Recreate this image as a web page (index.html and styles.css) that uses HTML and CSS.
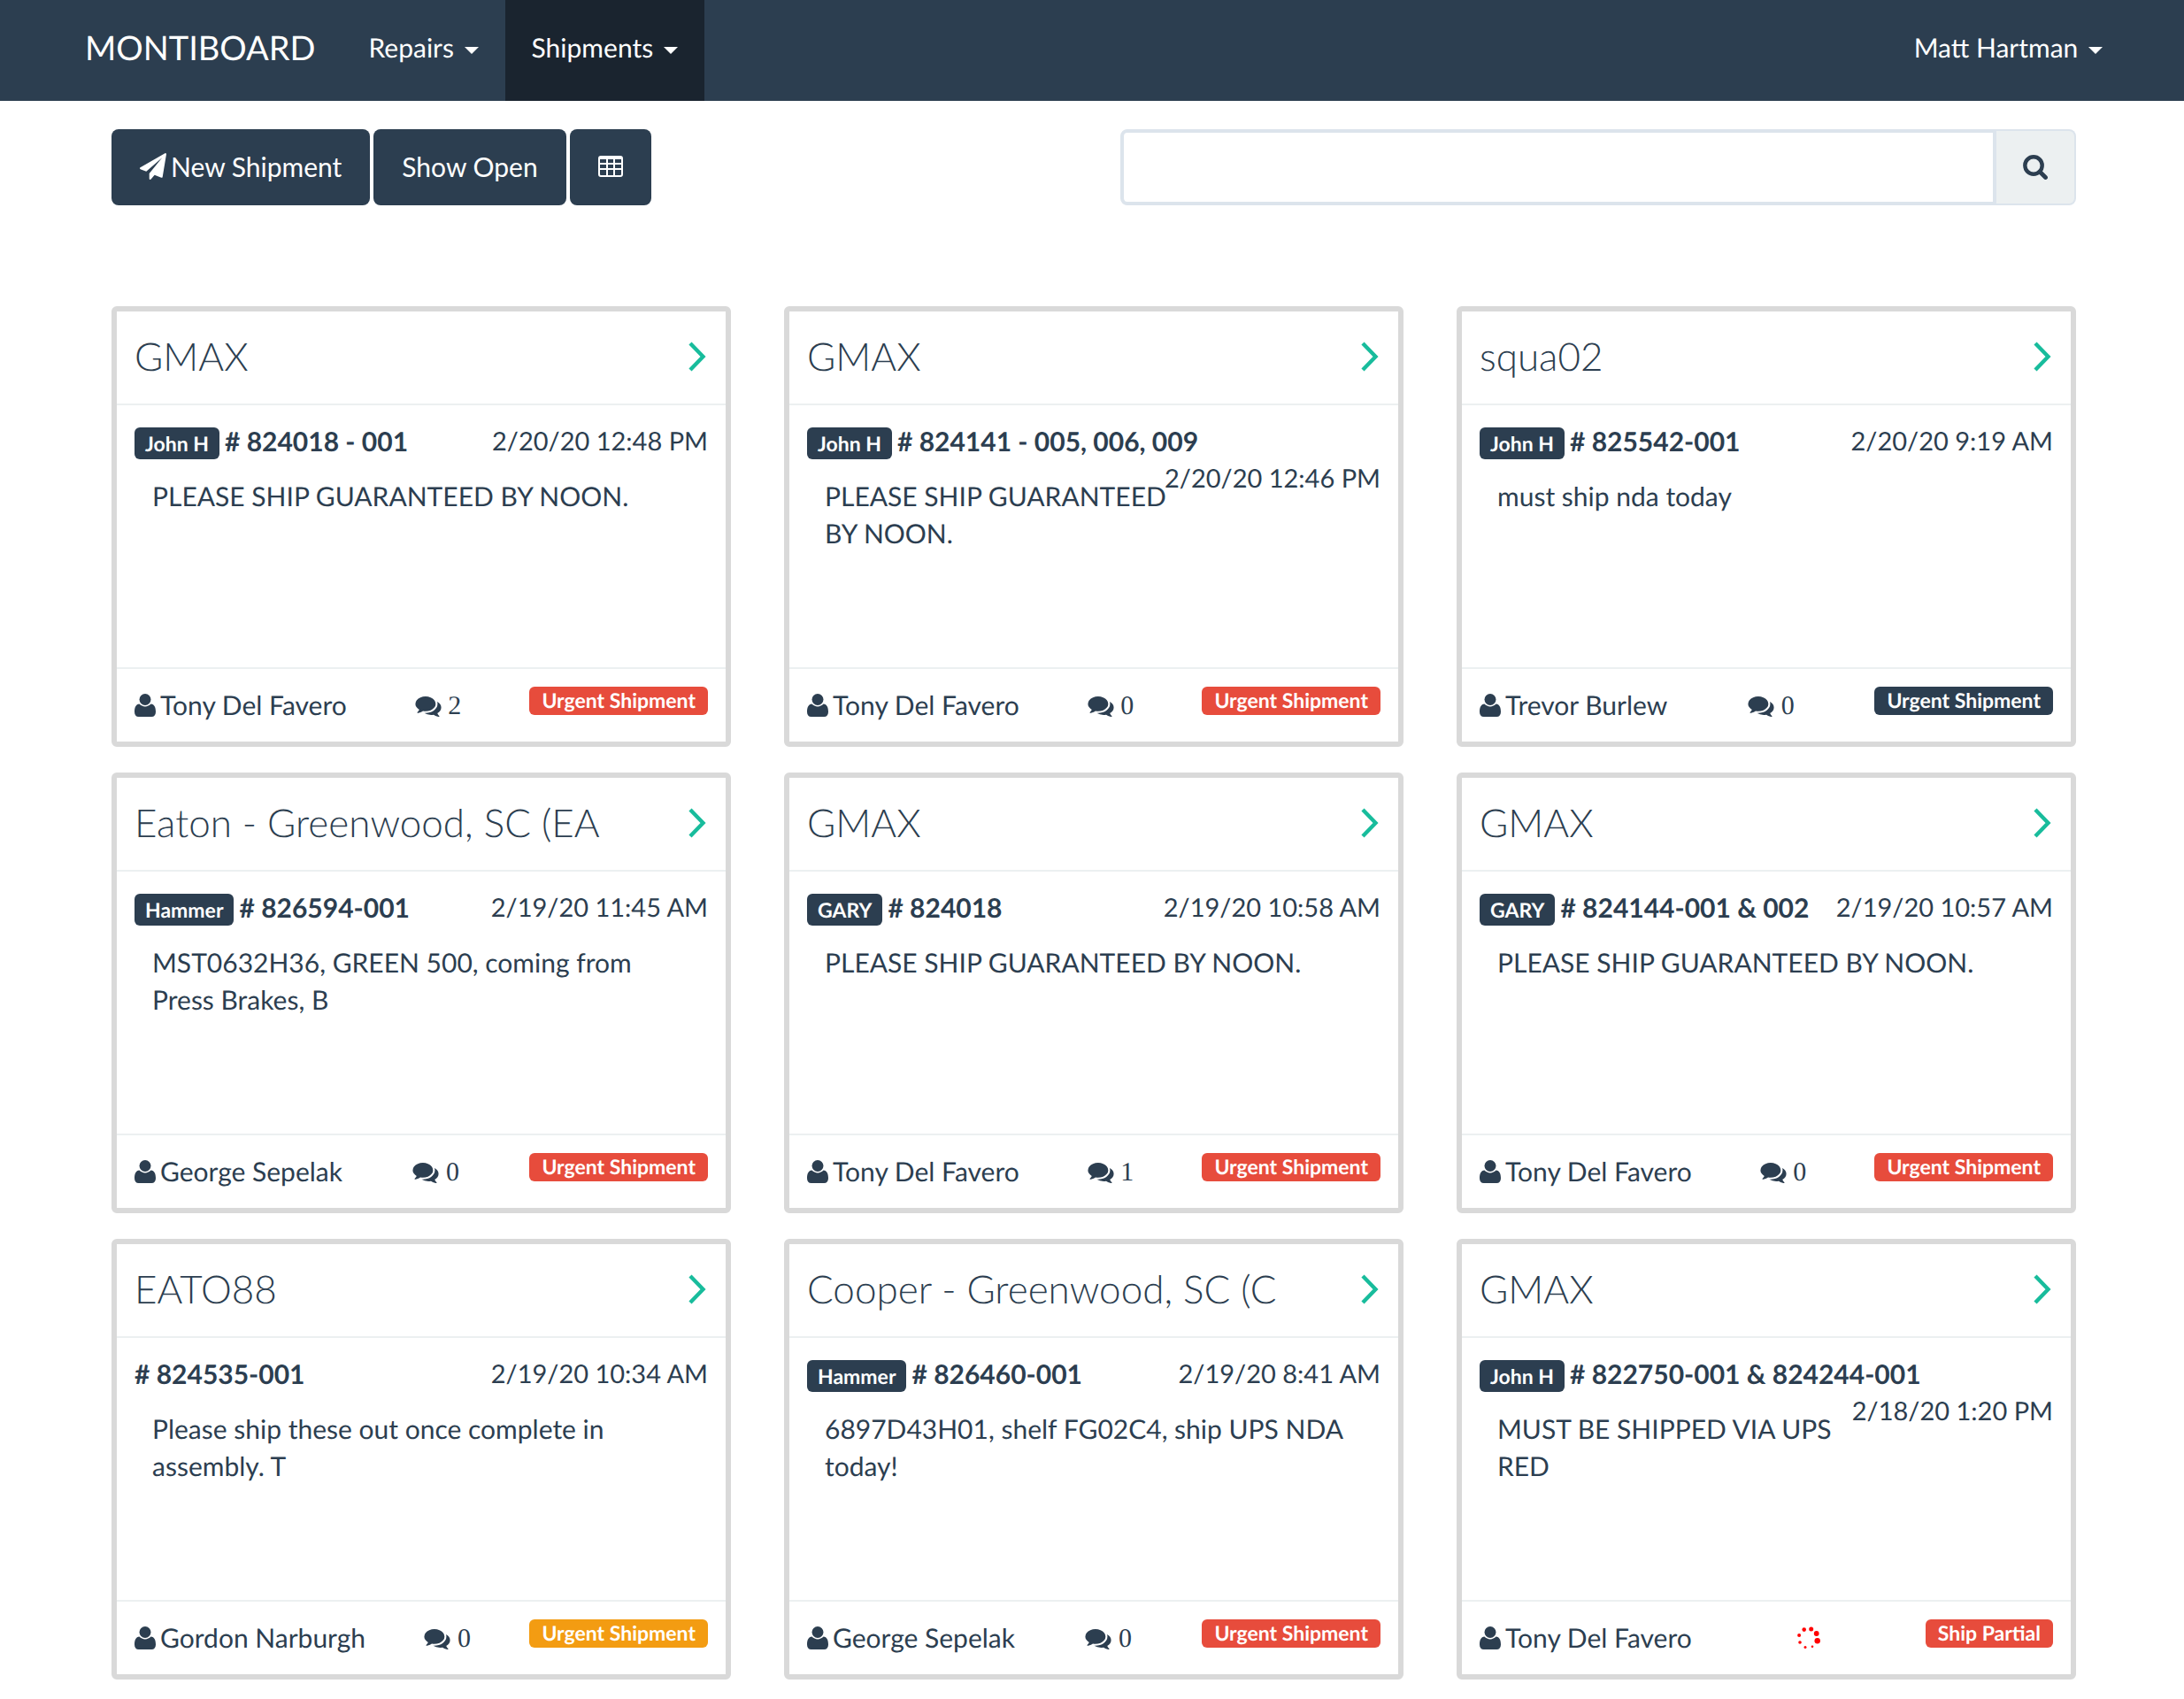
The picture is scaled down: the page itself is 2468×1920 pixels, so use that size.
FILE: index.html
```html
<!DOCTYPE html>
<html lang="en">
<head>
  <meta charset="UTF-8">
  <meta name="viewport" content="width=device-width, initial-scale=1.0">
  <title>Montiboard - Shipments</title>
  <link rel="stylesheet" href="styles.css">
</head>
<body>

  <!-- icon set -->
  <svg class="icon-defs" width="0" height="0" aria-hidden="true">
    <symbol id="icon-user" viewBox="0 0 24 26">
      <circle cx="12" cy="6.500" r="6.500"/>
      <path d="M5.500 11.500c1.700 1.800 4 2.900 6.500 2.900s4.800-1.100 6.500-2.900c4 .3 5.500 4.200 5.500 9 0 3.500-1.700 5.500-4.700 5.500H4.700C1.700 26 0 24 0 20.500c0-4.800 1.500-8.700 5.500-9z"/>
    </symbol>
    <symbol id="icon-comments" viewBox="0 128 1792 1536">
      <path d="M1408 768q0 139-94 257t-256.500 186.500-353.500 68.500q-86 0-176-16-124 88-278 128-36 9-86 16h-3q-11 0-20.500-8t-11.500-21q-1-3-1-6.500t.5-6.500 2-6l2.500-5 3.500-5.500 4-5 4.500-5 4-4.500q5-6 23-25t26-29.500 22.500-29 25-38.500 20.500-44q-124-72-195-177t-71-224q0-139 94-257t256.500-186.500 353.500-68.500 353.500 68.500 256.500 186.500 94 257zm384 256q0 120-71 224.500t-195 176.500q10 24 20.500 44t25 38.500 22.500 29 26 29.500 23 25q1 1 4 4.500t4.500 5 4 5 3.500 5.500l2.500 5 2 6 .5 6.500-1 6.500q-3 14-13 22t-22 7q-50-7-86-16-154-40-278-128-90 16-176 16-271 0-472-132 58 4 88 4 161 0 309-45t264-129q125-92 192-212t67-254q0-77-23-152 129 71 204 178t75 230z"/>
    </symbol>
    <symbol id="icon-plane" viewBox="0 0 1792 1792">
      <path d="M1764 11q33 24 27 64l-256 1536q-5 29-32 45-14 8-31 8-11 0-24-5l-453-185-242 295q-18 23-49 23-13 0-22-4-19-7-30.500-23.500t-11.500-36.500v-349l864-1059-1069 925-395-162q-37-14-40-55-2-40 32-59l1664-960q15-9 32-9 20 0 36 11z"/>
    </symbol>
    <symbol id="icon-table" viewBox="0 0 28 24">
      <path fill-rule="evenodd" d="M3 0h22a3 3 0 0 1 3 3v18a3 3 0 0 1-3 3H3a3 3 0 0 1-3-3V3a3 3 0 0 1 3-3zM2 4v4h7V4zm9 0v4h6V4zm8 0v4h7V4zM2 10v4h7v-4zm9 0v4h6v-4zm8 0v4h7v-4zM2 16v5q0 1 1 1h6v-6zm9 0v6h6v-6zm8 0v6h6q1 0 1-1v-5z"/>
    </symbol>
    <symbol id="icon-search" viewBox="0 0 28 28">
      <circle cx="12" cy="12" r="9.700" fill="none" stroke="currentColor" stroke-width="4.400"/>
      <path d="M19 19l6.500 6.500" stroke="currentColor" stroke-width="4.800" stroke-linecap="round"/>
    </symbol>
    <symbol id="icon-chevron" viewBox="0 0 20 34">
      <path d="M2 2l14.500 15L2 32" fill="none" stroke="currentColor" stroke-width="4.400"/>
    </symbol>
    <symbol id="icon-spinner" viewBox="0 0 26 26">
      <circle cx="15.700" cy="2.900" r="2.500"/>
      <circle cx="21.700" cy="8" r="2.900"/>
      <circle cx="22.700" cy="16.300" r="3.200"/>
      <circle cx="17" cy="22.700" r="1.300"/>
      <circle cx="9" cy="23.500" r="1.500"/>
      <circle cx="3" cy="18" r="1.800"/>
      <circle cx="2.100" cy="10" r="2"/>
      <circle cx="7.700" cy="3.600" r="2.300"/>
    </symbol>
  </svg>

  <nav class="navbar">
    <a class="brand" href="#">MONTIBOARD</a>
    <a class="nav-link" href="#">Repairs <span class="caret"></span></a>
    <a class="nav-link active" href="#">Shipments <span class="caret"></span></a>
    <a class="nav-link nav-user" href="#">Matt Hartman <span class="caret"></span></a>
  </nav>

  <main class="container">
    <div class="toolbar">
      <div class="toolbar-buttons">
        <button class="btn" type="button"><svg class="icon-plane"><use href="#icon-plane"/></svg>New Shipment</button>
        <button class="btn" type="button">Show Open</button>
        <button class="btn" type="button" aria-label="Table view"><svg class="icon-table"><use href="#icon-table"/></svg></button>
      </div>
      <form class="search">
        <input class="search-input" type="text" aria-label="Search shipments">
        <button class="search-btn" type="button" aria-label="Search"><svg class="icon-search"><use href="#icon-search"/></svg></button>
      </form>
    </div>

    <div class="cards" id="cards"></div>
  </main>

  <script src="script.js"></script>
</body>
</html>
```

FILE: styles.css
```css
* {
  box-sizing: border-box;
}

body {
  margin: 0;
  font-family: Lato, "Liberation Sans", sans-serif;
  font-size: 30px;
  line-height: 42px;
  text-rendering: geometricPrecision;
  color: #2c3e50;
  background-color: #fff;
}

a {
  color: inherit;
  text-decoration: none;
}

svg {
  fill: currentColor;
}

.icon-defs {
  position: absolute;
}

/* navbar */
.navbar {
  display: flex;
  height: 114px;
  padding: 0 62px 0 66px;
  background-color: #2c3e50;
  color: #fff;
}

.brand {
  padding: 33px 30px;
  font-size: 38px;
}

.nav-link {
  padding: 33px 30px;
}

.nav-link.active {
  background-color: #1a242f;
}

.nav-user {
  margin-left: auto;
}

.caret {
  display: inline-block;
  margin-left: 4px;
  vertical-align: middle;
  border-top: 8px solid;
  border-left: 8px solid transparent;
  border-right: 8px solid transparent;
}

/* toolbar */
.container {
  padding: 32px 122px 22px 126px;
}

.toolbar {
  display: flex;
  justify-content: space-between;
  margin-bottom: 114px;
}

.toolbar-buttons {
  display: flex;
  gap: 4px;
}

.btn {
  display: flex;
  align-items: center;
  gap: 5px;
  height: 86px;
  padding: 0 32px 2px;
  border: 0;
  border-radius: 8px;
  background-color: #2c3e50;
  color: #fff;
  font: inherit;
  cursor: pointer;
}

.icon-plane {
  width: 30px;
  height: 30px;
}

.icon-table {
  width: 28px;
  height: 24px;
}

.search {
  display: flex;
  width: 1080px;
}

.search-input {
  flex: 1;
  min-width: 0;
  height: 86px;
  padding: 0 30px;
  border: 4px solid #dce4ec;
  border-radius: 8px 0 0 8px;
  font: inherit;
  color: inherit;
}

.search-btn {
  width: 90px;
  border: 2px solid #dce4ec;
  border-left: 0;
  border-radius: 0 8px 8px 0;
  background-color: #ecf0f1;
  color: #2c3e50;
  cursor: pointer;
}

.icon-search {
  display: block;
  width: 28px;
  height: 28px;
  margin: 0 auto;
}

/* shipment cards */
.cards {
  display: grid;
  grid-template-columns: repeat(3, 1fr);
  gap: 29px 60px;
}

.card {
  border: 6px solid #d9d9d9;
  border-radius: 6px;
}

.card-header {
  display: flex;
  align-items: center;
  justify-content: space-between;
  height: 106px;
  padding: 0 22px 2px 20px;
  border-bottom: 2px solid #ecf0f1;
}

.card-title {
  margin: 0;
  font-size: 44px;
  font-weight: 300;
}

.open-link {
  color: #18bc9c;
}

.icon-chevron {
  display: block;
  width: 20px;
  height: 34px;
}

.card-body {
  height: 296px;
  padding: 20px;
}

.date {
  float: right;
  margin-left: -10px;
  font-size: 29px;
}

.order {
  font-weight: 700;
}

.tag,
.label {
  display: inline-block;
  border-radius: 6px;
  background-color: #2c3e50;
  color: #fff;
  font-size: 23px;
  font-weight: 700;
}

.tag {
  height: 36px;
  margin-right: 6px;
  padding: 0 12px;
  line-height: 36px;
}

.note {
  margin: 20px 20px 0;
}

.card-footer {
  display: flex;
  justify-content: space-between;
  height: 84px;
  padding: 20px;
  border-top: 2px solid #ecf0f1;
}

.user {
  display: flex;
  align-items: center;
  gap: 5px;
}

.icon-user {
  width: 24px;
  height: 26px;
}

.icon-comments {
  width: 30px;
  height: 25px;
  vertical-align: -3px;
}

.comments {
  font-family: "Liberation Serif", serif;
  line-height: 44px;
}

.icon-spinner {
  width: 26px;
  height: 26px;
  vertical-align: -3px;
  color: #f00;
}

.label {
  height: 32px;
  padding: 0 14px;
  line-height: 30px;
}

.label.danger {
  background-color: #e74c3c;
}

.label.warning {
  background-color: #f39c12;
}
```

FILE: script.js
```js
const shipments = [
  { title: 'GMAX', tag: 'John H', order: '824018 - 001', date: '2/20/20 12:48 PM', note: 'PLEASE SHIP GUARANTEED BY NOON.', user: 'Tony Del Favero', comments: 2, label: 'Urgent Shipment', level: 'danger' },
  { title: 'GMAX', tag: 'John H', order: '824141 - 005, 006, 009', date: '2/20/20 12:46 PM', note: 'PLEASE SHIP GUARANTEED BY NOON.', user: 'Tony Del Favero', comments: 0, label: 'Urgent Shipment', level: 'danger' },
  { title: 'squa02', tag: 'John H', order: '825542-001', date: '2/20/20 9:19 AM', note: 'must ship nda today', user: 'Trevor Burlew', comments: 0, label: 'Urgent Shipment', level: '' },
  { title: 'Eaton - Greenwood, SC (EA', tag: 'Hammer', order: '826594-001', date: '2/19/20 11:45 AM', note: 'MST0632H36, GREEN 500, coming from Press Brakes, B', user: 'George Sepelak', comments: 0, label: 'Urgent Shipment', level: 'danger' },
  { title: 'GMAX', tag: 'GARY', order: '824018', date: '2/19/20 10:58 AM', note: 'PLEASE SHIP GUARANTEED BY NOON.', user: 'Tony Del Favero', comments: 1, label: 'Urgent Shipment', level: 'danger' },
  { title: 'GMAX', tag: 'GARY', order: '824144-001 & 002', date: '2/19/20 10:57 AM', note: 'PLEASE SHIP GUARANTEED BY NOON.', user: 'Tony Del Favero', comments: 0, label: 'Urgent Shipment', level: 'danger' },
  { title: 'EATO88', tag: '', order: '824535-001', date: '2/19/20 10:34 AM', note: 'Please ship these out once complete in assembly. T', user: 'Gordon Narburgh', comments: 0, label: 'Urgent Shipment', level: 'warning' },
  { title: 'Cooper - Greenwood, SC (C', tag: 'Hammer', order: '826460-001', date: '2/19/20 8:41 AM', note: '6897D43H01, shelf FG02C4, ship UPS NDA today!', user: 'George Sepelak', comments: 0, label: 'Urgent Shipment', level: 'danger' },
  { title: 'GMAX', tag: 'John H', order: '822750-001 & 824244-001', date: '2/18/20 1:20 PM', note: 'MUST BE SHIPPED VIA UPS RED', user: 'Tony Del Favero', comments: null, label: 'Ship Partial', level: 'danger' }
];

function icon(name) {
  return `<svg class="icon-${name}"><use href="#icon-${name}"/></svg>`;
}

document.getElementById('cards').innerHTML = shipments.map(s => `
  <article class="card">
    <div class="card-header">
      <h3 class="card-title">${s.title}</h3>
      <a class="open-link" href="#" aria-label="Open shipment">${icon('chevron')}</a>
    </div>
    <div class="card-body">
      ${s.tag ? `<span class="tag">${s.tag}</span>` : ''}<span class="order"># ${s.order.replace('&', '&amp;')}</span>
      <span class="date">${s.date}</span>
      <p class="note">${s.note}</p>
    </div>
    <div class="card-footer">
      <span class="user">${icon('user')}${s.user}</span>
      <span class="comments">${s.comments === null ? icon('spinner') : icon('comments') + ' ' + s.comments}</span>
      <span class="label ${s.level}">${s.label}</span>
    </div>
  </article>`).join('');
```
